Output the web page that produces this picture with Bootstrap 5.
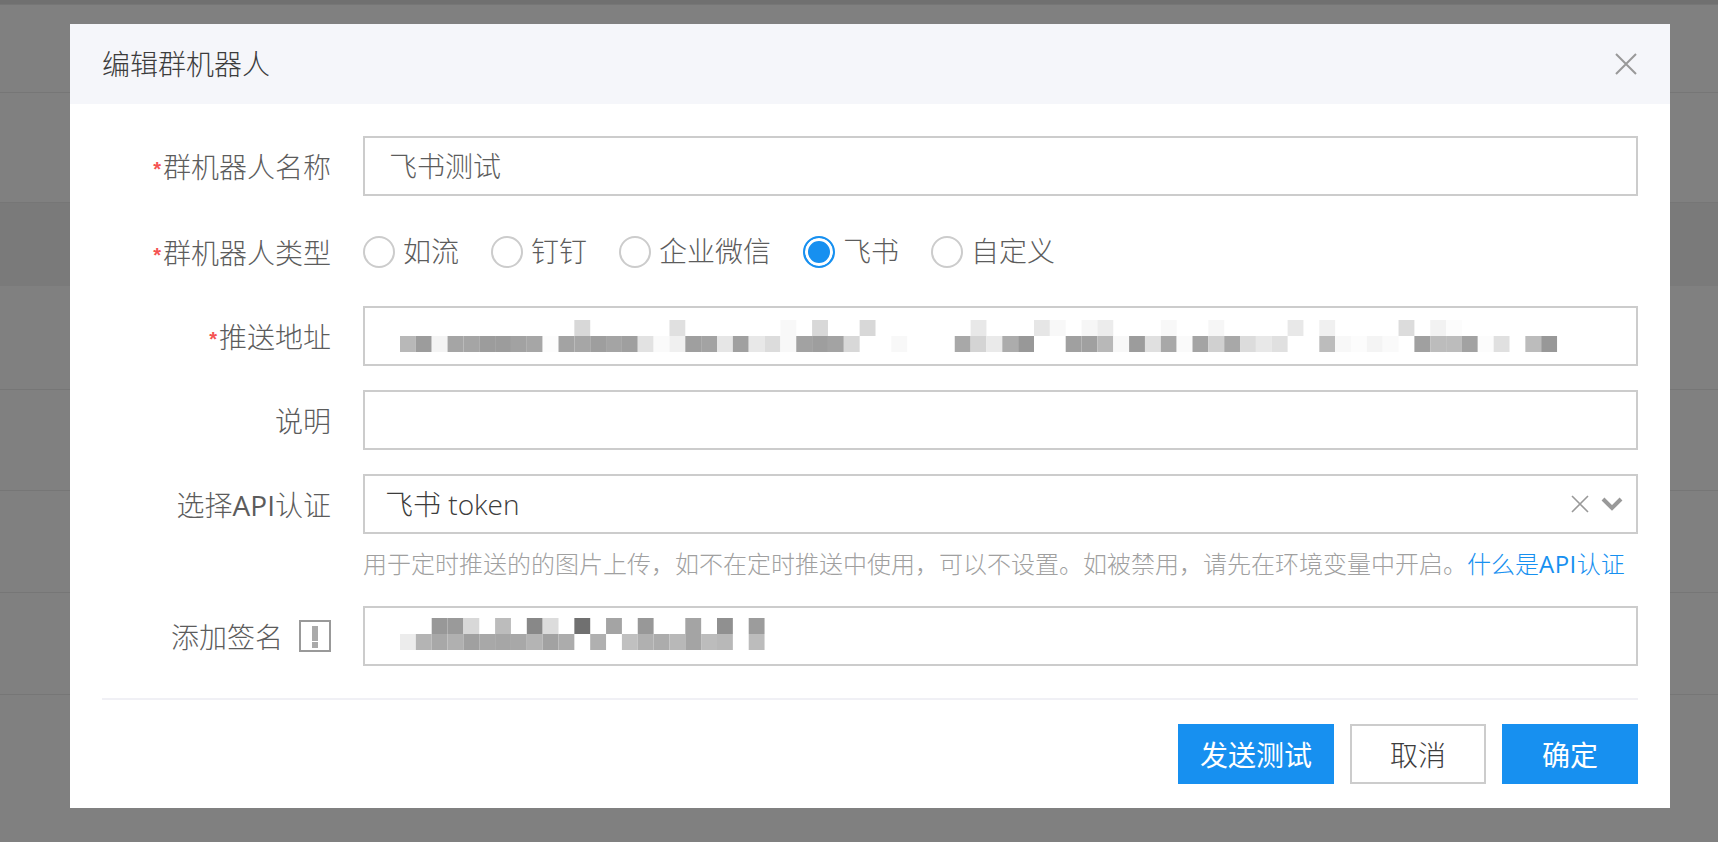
<!DOCTYPE html>
<html>
<head>
    <title>编辑群机器人</title>
    <meta charset="utf-8">
    <meta name="viewport" content="width=device-width, initial-scale=1">
    <link href="https://cdn.jsdelivr.net/npm/bootstrap@5.3.3/dist/css/bootstrap.min.css" rel="stylesheet">
    <script src="https://cdn.jsdelivr.net/npm/bootstrap@5.3.3/dist/js/bootstrap.bundle.min.js"></script>
    <style>
        body {
            background-color: #808080;
            font-family: "Open Sans", "Noto Sans CJK SC", sans-serif;
            font-weight: 300;
            overflow: hidden;
        }
        /* table rows behind the overlay */
        .bg-top { height: 5px; background-color: #707070; border-bottom: 1px solid #767676; }
        .bg-line { border-bottom: 1px solid #767676; }
        .bg-dark-row { background-color: #7a7a7a; }

        .robot-dialog { max-width: 1600px; width: 1600px; margin: 24px 0 0 70px; }
        .robot-dialog .modal-content { border: 0; border-radius: 0; background-color: #fff; }
        .robot-head { height: 80px; padding: 0 33px 0 32px; background-color: #f5f6fa; color: #3c3c3c; font-size: 28px; }
        .robot-body { padding: 32px 32px 24px; }

        .form-line { margin-bottom: 24px; }
        .form-line.radio-line { margin-bottom: 22px; height: 64px; }
        .form-line.no-gap { margin-bottom: 0; }
        .field-label { width: 229px; margin-right: 32px; padding-top: 2px; flex-shrink: 0; font-size: 28px; color: #5c5c5c; }
        .req { font-family: "Liberation Sans", sans-serif; font-weight: 700; color: #f55353; font-size: 20px; margin-right: 2px; position: relative; top: -2px; }
        .api-word { font-weight: 400; }
        .help-line .api-word { letter-spacing: .5px; }

        .field-box {
            height: 60px;
            border: 2px solid #ccc;
            border-radius: 0;
            font-size: 28px;
            font-weight: 300;
            color: #5c5c5c;
            padding: 0 0 0 24px;
            box-shadow: none;
        }
        .field-box.select-box { padding: 0 13px 0 20px; color: #3c3c3c; }
        .field-box.mosaic-a { padding: 12px 0 0 35px; }
        .field-box.mosaic-b { padding: 10px 0 0 35px; }
        .field-box svg { display: block; }
        .chevron-mark { margin-left: 12px; }

        .radio-item { margin-right: 32px; padding-bottom: 2px; font-size: 28px; color: #5c5c5c; gap: 8px; }
        .radio-item .form-check-input {
            width: 32px;
            height: 32px;
            margin: 2px 0 0;
            border: 2px solid #ccc;
            flex-shrink: 0;
        }
        .radio-item .form-check-input:checked {
            background-image: none;
            background-color: #1790f0;
            border-color: #1790f0;
            box-shadow: inset 0 0 0 3px #fff;
        }

        .help-line { margin: 12px 0 24px 261px; height: 36px; font-size: 24px; line-height: 36px; color: #a0a0a0; white-space: nowrap; }
        .help-line a { color: #1790f0; text-decoration: none; }
        .warn-icon { margin-left: 16px; margin-top: -2px; }

        .foot-line { margin-top: 32px; padding-top: 24px; border-top: 2px solid #f0f0f5; gap: 16px; }
        .robot-btn { height: 60px; border-radius: 0; font-size: 28px; font-weight: 300; line-height: 1; padding: 2px 0 0; border: 2px solid #ccc; background-color: #fff; color: #3c3c3c; width: 136px; }
        .robot-btn.is-blue { background-color: #1790f0; border-color: #1790f0; color: #fff; font-weight: 400; }
        .robot-btn.is-wide { width: 156px; }
    </style>
    <script>
        // blurred-out secrets, one grey per cell, "--" = no cell
        var cell = 15.85;
        function drawMosaic(id, top, bottom) {
            var out = "";
            [top, bottom].forEach(function(list, r) {
                list.split(" ").forEach(function(g, i) {
                    if (g !== "--") {
                        out += '<rect x="' + (i * cell) + '" y="' + (r * 16) + '" width="' + cell + '" height="16" fill="#' + g + g + g + '"/>';
                    }
                });
            });
            document.getElementById(id).innerHTML = out;
        }
        window.onload = function() {
            drawMosaic("pushUrl",
                "-- -- -- -- -- -- -- -- -- -- -- d8 -- -- -- -- -- e0 -- -- -- -- -- -- f8 -- d8 -- -- d8 -- -- -- -- -- -- e8 -- -- -- e6 f8 -- f6 ec -- -- -- f8 -- -- f6 -- -- -- -- e8 -- f0 -- -- -- -- dc -- f2 fc -- -- -- -- -- --",
                "b8 9c f4 a5 a5 9c 9c a2 a6 fc a3 a6 9e a4 9f e2 fa f0 9f a3 e6 a0 e8 dc f8 a2 9e a3 d8 -- -- f8 -- -- -- a8 d4 ea ac 98 -- -- a0 a0 b8 f8 9c e0 a8 fa a4 d0 a8 dc e8 e0 -- -- bc f8 fc f4 fa -- a0 bc bc a2 fc e0 -- bc 98");
            drawMosaic("signKey",
                "-- -- 98 9a d8 -- bc -- 88 dc -- 70 -- a4 -- 98 -- -- a4 -- 90 -- 9c",
                "ec b4 a8 b0 a0 a8 a6 a8 b4 a2 ac -- b0 -- c0 b0 ac b8 a4 bc b8 -- bc");
        };
    </script>
</head>
<body>
    <div class="bg-top"></div>
    <div class="bg-line" style="height:88px"></div>
    <div class="bg-line" style="height:110px"></div>
    <div class="bg-dark-row" style="height:83px"></div>
    <div class="bg-line" style="height:104px"></div>
    <div class="bg-line" style="height:101px"></div>
    <div class="bg-line" style="height:102px"></div>
    <div class="bg-line" style="height:102px"></div>

    <div class="modal d-block">
        <div class="modal-dialog robot-dialog">
            <div class="modal-content">
                <div class="robot-head d-flex align-items-center justify-content-between">
                    <span>编辑群机器人</span>
                    <svg width="22" height="22" viewBox="0 0 22 22" fill="none" stroke="#999" stroke-width="2"><path d="M1 1L21 21M21 1L1 21"/></svg>
                </div>
                <div class="robot-body">
                    <div class="form-line d-flex align-items-center">
                        <label class="field-label text-end"><span class="req">*</span>群机器人名称</label>
                        <div class="form-control field-box d-flex align-items-center">飞书测试</div>
                    </div>
                    <div class="form-line radio-line d-flex align-items-center">
                        <label class="field-label text-end"><span class="req">*</span>群机器人类型</label>
                        <label class="radio-item d-flex align-items-center"><input class="form-check-input" type="radio" name="kind">如流</label>
                        <label class="radio-item d-flex align-items-center"><input class="form-check-input" type="radio" name="kind">钉钉</label>
                        <label class="radio-item d-flex align-items-center"><input class="form-check-input" type="radio" name="kind">企业微信</label>
                        <label class="radio-item d-flex align-items-center"><input class="form-check-input" type="radio" name="kind" checked>飞书</label>
                        <label class="radio-item d-flex align-items-center"><input class="form-check-input" type="radio" name="kind">自定义</label>
                    </div>
                    <div class="form-line d-flex align-items-center">
                        <label class="field-label text-end"><span class="req">*</span>推送地址</label>
                        <div class="form-control field-box mosaic-a"><svg id="pushUrl" width="1160" height="32"></svg></div>
                    </div>
                    <div class="form-line d-flex align-items-center">
                        <label class="field-label text-end">说明</label>
                        <div class="form-control field-box"></div>
                    </div>
                    <div class="form-line no-gap d-flex align-items-center">
                        <label class="field-label text-end">选择<span class="api-word">API</span>认证</label>
                        <div class="form-control field-box select-box d-flex align-items-center">
                            <span class="flex-grow-1">飞书 token</span>
                            <svg width="18" height="18" viewBox="0 0 18 18" fill="none" stroke="#999" stroke-width="1.6"><path d="M1 1L17 17M17 1L1 17"/></svg>
                            <svg class="chevron-mark" width="22" height="14" viewBox="0 0 22 14" fill="none" stroke="#999" stroke-width="4"><path d="M2 2L11 11L20 2"/></svg>
                        </div>
                    </div>
                    <div class="help-line">用于定时推送的的图片上传，如不在定时推送中使用，可以不设置。如被禁用，请先在环境变量中开启。<a href="#">什么是<span class="api-word">API</span>认证</a></div>
                    <div class="d-flex align-items-center">
                        <label class="field-label d-flex align-items-center justify-content-end">添加签名<svg class="warn-icon" width="32" height="32" viewBox="0 0 32 32"><rect x="1" y="1" width="30" height="30" fill="none" stroke="#999" stroke-width="2"/><path d="M13 6H19V21H13ZM13 22H19V28H13Z" fill="#aaa"/></svg></label>
                        <div class="form-control field-box mosaic-b"><svg id="signKey" width="370" height="32"></svg></div>
                    </div>
                    <div class="foot-line d-flex justify-content-end">
                        <button type="button" class="btn robot-btn is-blue is-wide">发送测试</button>
                        <button type="button" class="btn robot-btn">取消</button>
                        <button type="button" class="btn robot-btn is-blue">确定</button>
                    </div>
                </div>
            </div>
        </div>
    </div>
</body>
</html>
